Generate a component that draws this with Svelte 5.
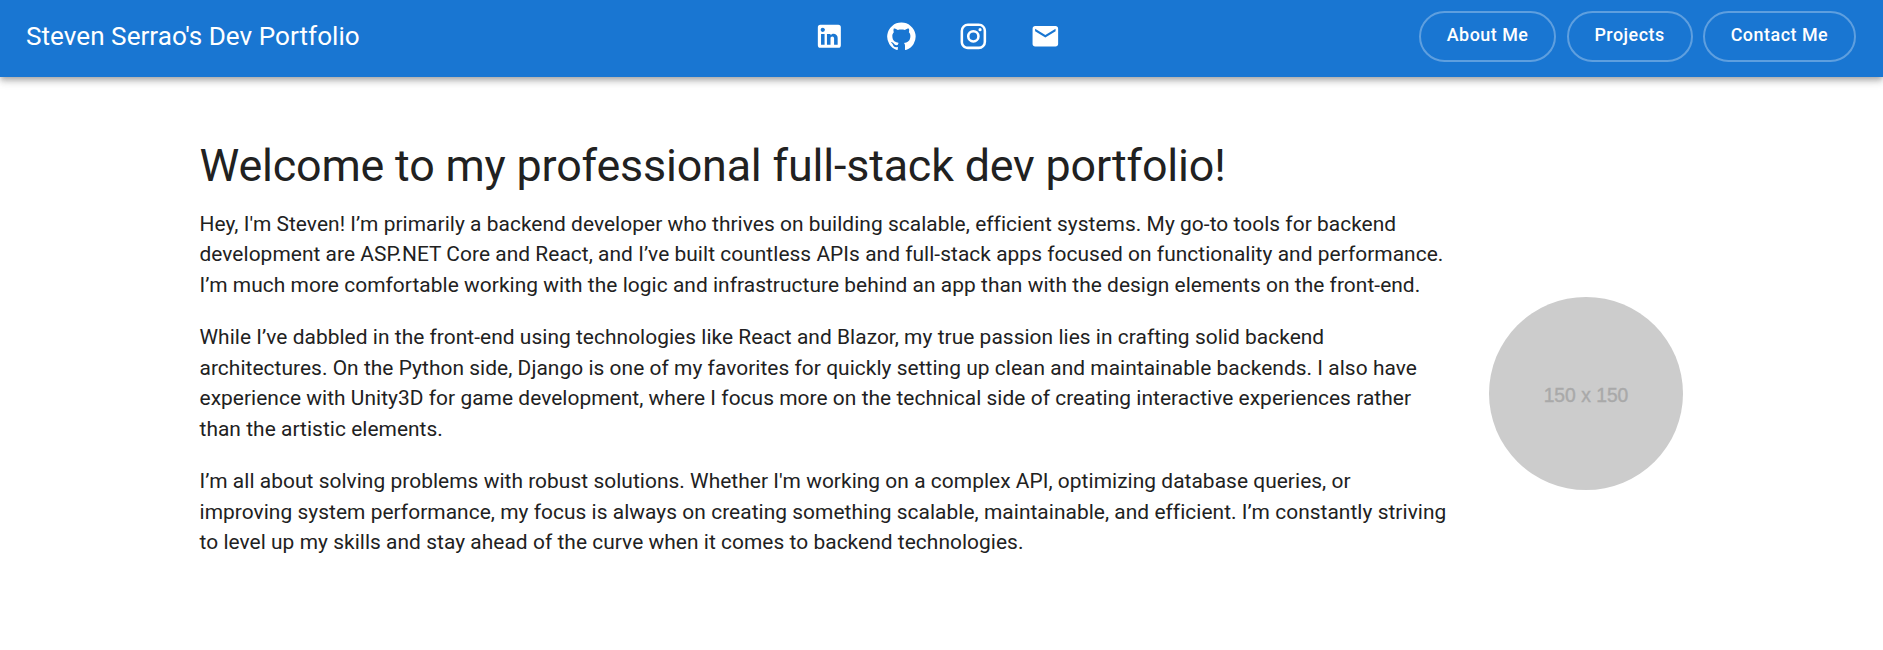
<script>
  const icons = [
    { label: 'LinkedIn', d: 'M19 3a2 2 0 0 1 2 2v14a2 2 0 0 1-2 2H5a2 2 0 0 1-2-2V5a2 2 0 0 1 2-2h14m-.5 15.5v-5.3a3.26 3.26 0 0 0-3.26-3.26c-.85 0-1.84.52-2.32 1.3v-1.11h-2.79v8.37h2.79v-4.93c0-.77.62-1.4 1.39-1.4a1.4 1.4 0 0 1 1.4 1.4v4.93h2.79M6.88 8.56a1.68 1.68 0 0 0 1.68-1.68c0-.93-.75-1.69-1.68-1.69a1.69 1.69 0 0 0-1.69 1.69c0 .93.76 1.68 1.69 1.68m1.39 9.94v-8.37H5.5v8.37h2.77z' },
    { label: 'GitHub', d: 'M12 1.27a11 11 0 00-3.48 21.46c.55.09.73-.28.73-.55v-1.84c-3.03.64-3.67-1.46-3.67-1.46-.55-1.29-1.28-1.65-1.28-1.65-.92-.65.1-.65.1-.65 1.1 0 1.73 1.1 1.73 1.1.92 1.65 2.57 1.2 3.21.92a2 2 0 01.64-1.47c-2.47-.27-5.04-1.19-5.04-5.5 0-1.1.46-2.1 1.2-2.84a3.76 3.76 0 010-2.93s.91-.28 3.11 1.1c1.8-.49 3.7-.49 5.5 0 2.1-1.38 3.02-1.1 3.02-1.1a3.76 3.76 0 01.1 2.93c.83.74 1.2 1.74 1.2 2.94 0 4.21-2.57 5.13-5.04 5.4.45.37.82.92.82 2.02v3.03c0 .27.1.64.73.55A11 11 0 0012 1.27' },
    { label: 'Instagram', d: 'M7.8 2h8.4C19.4 2 22 4.6 22 7.8v8.4a5.8 5.8 0 0 1-5.8 5.8H7.8C4.6 22 2 19.4 2 16.2V7.8A5.8 5.8 0 0 1 7.8 2m-.2 2A3.6 3.6 0 0 0 4 7.6v8.8C4 18.39 5.61 20 7.6 20h8.8a3.6 3.6 0 0 0 3.6-3.6V7.6C20 5.61 18.39 4 16.4 4H7.6m9.65 1.5a1.25 1.25 0 0 1 1.25 1.25A1.25 1.25 0 0 1 17.25 8 1.25 1.25 0 0 1 16 6.75a1.25 1.25 0 0 1 1.25-1.25M12 7a5 5 0 0 1 5 5 5 5 0 0 1-5 5 5 5 0 0 1-5-5 5 5 0 0 1 5-5m0 2a3 3 0 0 0-3 3 3 3 0 0 0 3 3 3 3 0 0 0 3-3 3 3 0 0 0-3-3z' },
    { label: 'Email', d: 'M20 4H4c-1.1 0-1.99.9-1.99 2L2 18c0 1.1.9 2 2 2h16c1.1 0 2-.9 2-2V6c0-1.1-.9-2-2-2m0 4-8 5-8-5V6l8 5 8-5z' }
  ];
  const links = ['About Me', 'Projects', 'Contact Me'];
  const paragraphs = [
    `Hey, I'm Steven! I’m primarily a backend developer who thrives on building scalable, efficient systems. My go-to tools for backend
development are ASP.NET Core and React, and I’ve built countless APIs and full-stack apps focused on functionality and performance.
I’m much more comfortable working with the logic and infrastructure behind an app than with the design elements on the front-end.`,
    `While I’ve dabbled in the front-end using technologies like React and Blazor, my true passion lies in crafting solid backend
architectures. On the Python side, Django is one of my favorites for quickly setting up clean and maintainable backends. I also have
experience with Unity3D for game development, where I focus more on the technical side of creating interactive experiences rather
than the artistic elements.`,
    `I’m all about solving problems with robust solutions. Whether I'm working on a complex API, optimizing database queries, or
improving system performance, my focus is always on creating something scalable, maintainable, and efficient. I’m constantly striving
to level up my skills and stay ahead of the curve when it comes to backend technologies.`
  ];
</script>

<header>
  <div class="brand">Steven Serrao's Dev Portfolio</div>
  <div class="social">
    {#each icons as icon}
      <button class="icon" aria-label={icon.label}>
        <svg viewBox="0 0 24 24"><path d={icon.d} /></svg>
      </button>
    {/each}
  </div>
  <nav>
    {#each links as link}
      <button class="link">{link}</button>
    {/each}
  </nav>
</header>

<main>
  <section>
    <h1>Welcome to my professional full-stack dev portfolio!</h1>
    {#each paragraphs as text}
      <p>{text}</p>
    {/each}
  </section>
  <div class="avatar">150 x 150</div>
</main>

<style>
  :global(body) {
    margin: 0;
    background: #fff;
    color: #212121;
    font-family: Roboto, sans-serif;
  }
  header {
    box-sizing: border-box;
    height: 77px;
    padding: 0 27px 4px 26px;
    display: grid;
    grid-template-columns: 1fr auto 1fr;
    align-items: center;
    background: #1976d2;
    color: #fff;
    box-shadow: 0 2.5px 5px -1px rgba(0, 0, 0, 0.2), 0 5px 6px rgba(0, 0, 0, 0.14), 0 1px 13px rgba(0, 0, 0, 0.12);
  }
  .brand {
    padding-bottom: 2px;
    font-size: 26.1px;
    line-height: 40px;
    letter-spacing: 0.03px;
    white-space: nowrap;
  }
  button {
    background: none;
    color: inherit;
    font-family: inherit;
  }
  .social {
    display: flex;
    gap: 20px;
    margin-left: -8px;
  }
  .icon {
    width: 52px;
    height: 52px;
    padding: 0;
    border: 0;
    display: flex;
    align-items: center;
    justify-content: center;
  }
  svg {
    width: 30.7px;
    height: 30.7px;
    fill: currentColor;
  }
  nav {
    display: flex;
    justify-content: flex-end;
    gap: 10.3px;
  }
  .link {
    box-sizing: border-box;
    height: 51px;
    padding: 0 25.8px 5px;
    border: 2px solid rgba(255, 255, 255, 0.3);
    border-radius: 26px;
    font-size: 17.92px;
    font-weight: 500;
    letter-spacing: 0.51px;
    white-space: nowrap;
  }
  main {
    padding: 59px 200px 0 199.5px;
    display: flex;
    align-items: center;
    gap: 38.5px;
  }
  section {
    width: 1251px;
  }
  h1 {
    margin: 0 0 12.6px;
    font-size: 44.8px;
    font-weight: 400;
    line-height: 60px;
    letter-spacing: -0.16px;
    white-space: nowrap;
  }
  p {
    margin: 0 0 21.2px;
    font-size: 20.9px;
    line-height: 30.72px;
    letter-spacing: 0.052px;
    white-space: pre;
  }
  .avatar {
    flex: none;
    box-sizing: border-box;
    width: 194px;
    height: 193px;
    margin-top: 71px;
    padding-top: 6px;
    display: flex;
    align-items: center;
    justify-content: center;
    border-radius: 50%;
    background: #ccc;
    color: #a9a9a9;
    font-family: "Liberation Sans", Arial, sans-serif;
    font-size: 19.3px;
    -webkit-text-stroke: 0.4px #a9a9a9;
  }
</style>
